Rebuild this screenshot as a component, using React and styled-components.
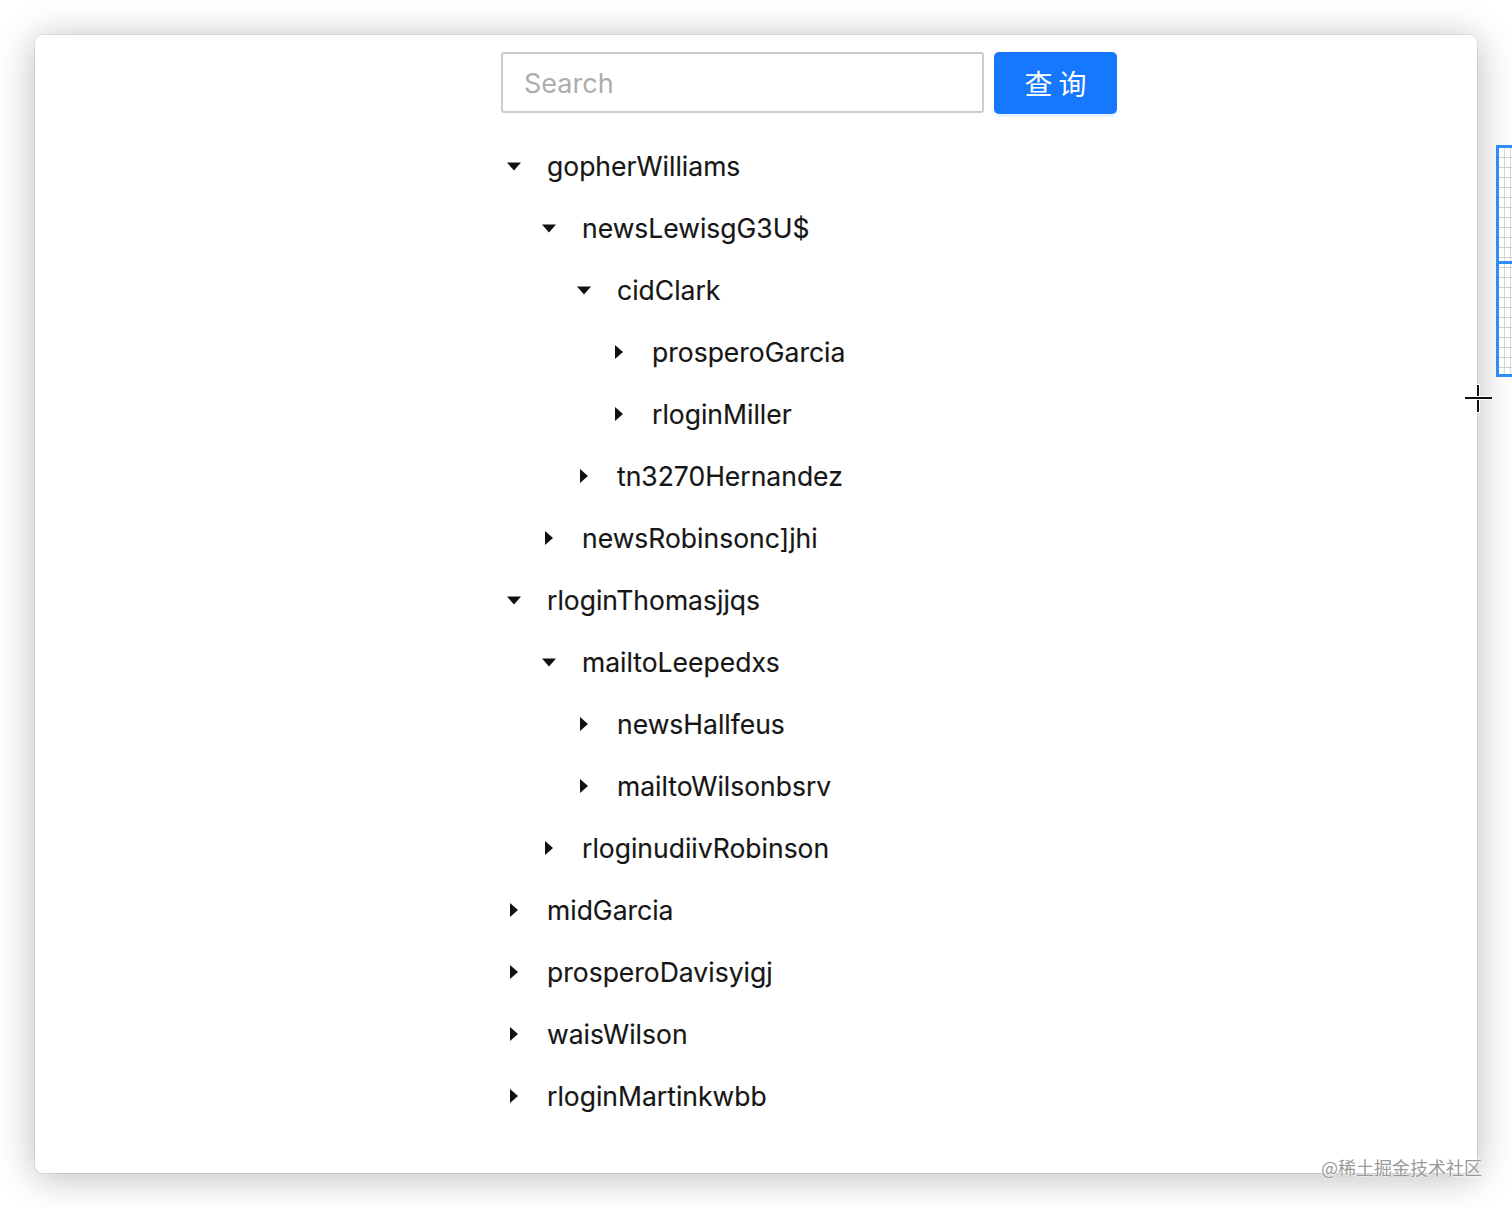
import React, { useState } from 'react';
import styled, { createGlobalStyle } from 'styled-components';

const GlobalStyle = createGlobalStyle`
  html, body {
    margin: 0;
    padding: 0;
    background: #fff;
  }
  body {
    font-family: Inter, "Noto Sans", "Noto Sans CJK SC", sans-serif;
  }
`;

// Screen area around the window
const Page = styled.div`
  position: relative;
  width: 1512px;
  height: 1208px;
  padding: 35px;
  box-sizing: border-box;
  overflow: hidden;
  background: #fff;
`;

const Window = styled.div`
  height: 100%;
  background: #fff;
  border-radius: 8px;
  box-shadow: 0 4px 38px rgba(0, 0, 0, 0.28), 0 0 0 1px rgba(0, 0, 0, 0.07);
  padding: 17px 0 0 466px;
  box-sizing: border-box;
  display: flex;
  flex-direction: column;
`;

const SearchBar = styled.div`
  display: flex;
  gap: 10px;
  align-items: flex-start;
`;

const SearchInput = styled.input`
  width: 483px;
  height: 61px;
  box-sizing: border-box;
  border: 2px solid #cdcdcd;
  border-radius: 3px;
  padding: 2px 21px 0;
  font-family: Inter, "Noto Sans", sans-serif;
  font-size: 27px;
  color: #222;
  outline: none;

  &::placeholder {
    color: #adadad;
  }
`;

const SearchButton = styled.button`
  width: 123px;
  height: 62px;
  border: none;
  border-radius: 5px;
  background: #1677ff;
  color: #fff;
  font-family: "Noto Sans CJK SC", sans-serif;
  font-size: 28px;
  letter-spacing: 6px;
  padding: 0 0 0 6px;
  cursor: pointer;
  box-shadow: 0 3px 0 rgba(5, 145, 255, 0.1);
`;

const Tree = styled.ul`
  list-style: none;
  margin: 21px 0 0;
  padding: 0;
`;

const Row = styled.li`
  height: 62px;
  display: flex;
  align-items: center;
  padding-left: ${(p) => 3 + p.$level * 35}px;
  cursor: pointer;
`;

const Switcher = styled.span`
  width: 20px;
  height: 20px;
  display: flex;
  align-items: center;
  justify-content: center;
  margin-right: 23px;
  flex-shrink: 0;
`;

const Title = styled.span`
  font-size: 26.5px;
  color: #161616;
  white-space: nowrap;
  -webkit-text-stroke: 0.15px #161616;
`;

const Watermark = styled.div`
  position: absolute;
  right: 30px;
  top: 1154px;
  font-family: "Noto Sans CJK SC", sans-serif;
  font-size: 18px;
  color: #9a9a9a;
  text-shadow: 0 0 2px #fff, 0 0 2px #fff;
`;

// Partially visible panel peeking in at the right edge
const EdgePanel = styled.div`
  position: absolute;
  left: 1496px;
  top: 145px;
  width: 40px;
  height: 232px;
  box-sizing: border-box;
  border: 3px solid #2e8df6;
  background-color: #fff;
  background-image:
    linear-gradient(#2e8df6, #2e8df6),
    repeating-linear-gradient(to bottom, transparent 0 9px, #cfcfcf 9px 10px),
    repeating-linear-gradient(to right, transparent 0 5px, #d8d8d8 5px 6px);
  background-size: 100% 3px, 100% 100%, 100% 100%;
  background-position: 0 113px, 0 0, 0 0;
  background-repeat: no-repeat;
`;

const Crosshair = styled.div`
  position: absolute;
  left: 1465px;
  top: 385px;
  width: 27px;
  height: 27px;

  &::before,
  &::after {
    content: '';
    position: absolute;
    background: #111;
    box-shadow: 0 0 0 1px #fff;
  }
  &::before {
    left: 12px;
    top: 0;
    width: 2px;
    height: 27px;
  }
  &::after {
    top: 12px;
    left: 0;
    width: 27px;
    height: 2px;
  }
`;

const treeData = [
  {
    key: '0',
    title: 'gopherWilliams',
    children: [
      {
        key: '0-0',
        title: 'newsLewisgG3U$',
        children: [
          {
            key: '0-0-0',
            title: 'cidClark',
            children: [
              { key: '0-0-0-0', title: 'prosperoGarcia', children: [{ key: '0-0-0-0-0', title: 'leaf' }] },
              { key: '0-0-0-1', title: 'rloginMiller', children: [{ key: '0-0-0-1-0', title: 'leaf' }] },
            ],
          },
          { key: '0-0-1', title: 'tn3270Hernandez', children: [{ key: '0-0-1-0', title: 'leaf' }] },
        ],
      },
      { key: '0-1', title: 'newsRobinsonc]jhi', children: [{ key: '0-1-0', title: 'leaf' }] },
    ],
  },
  {
    key: '1',
    title: 'rloginThomasjjqs',
    children: [
      {
        key: '1-0',
        title: 'mailtoLeepedxs',
        children: [
          { key: '1-0-0', title: 'newsHallfeus', children: [{ key: '1-0-0-0', title: 'leaf' }] },
          { key: '1-0-1', title: 'mailtoWilsonbsrv', children: [{ key: '1-0-1-0', title: 'leaf' }] },
        ],
      },
      { key: '1-1', title: 'rloginudiivRobinson', children: [{ key: '1-1-0', title: 'leaf' }] },
    ],
  },
  { key: '2', title: 'midGarcia', children: [{ key: '2-0', title: 'leaf' }] },
  { key: '3', title: 'prosperoDavisyigj', children: [{ key: '3-0', title: 'leaf' }] },
  { key: '4', title: 'waisWilson', children: [{ key: '4-0', title: 'leaf' }] },
  { key: '5', title: 'rloginMartinkwbb', children: [{ key: '5-0', title: 'leaf' }] },
];

const Caret = ({ open }) => (
  <svg width="16" height="16" viewBox="0 0 16 16">
    {open ? <path d="M1 4.5h14L8 12.5z" fill="#111" /> : <path d="M4 1v14l8-7z" fill="#111" />}
  </svg>
);

const renderNodes = (nodes, level, expanded, toggle) =>
  nodes.flatMap((node) => {
    const open = expanded.includes(node.key);
    const rows = [
      <Row key={node.key} $level={level} onClick={() => toggle(node.key)}>
        <Switcher>{node.children && <Caret open={open} />}</Switcher>
        <Title>{node.title}</Title>
      </Row>,
    ];
    if (open && node.children) {
      rows.push(...renderNodes(node.children, level + 1, expanded, toggle));
    }
    return rows;
  });

const App = () => {
  const [expanded, setExpanded] = useState(['0', '0-0', '0-0-0', '1', '1-0']);
  const [query, setQuery] = useState('');

  const toggle = (key) =>
    setExpanded((prev) => (prev.includes(key) ? prev.filter((k) => k !== key) : [...prev, key]));

  return (
    <>
      <GlobalStyle />
      <Page>
        <Window>
          <SearchBar>
            <SearchInput placeholder="Search" value={query} onChange={(e) => setQuery(e.target.value)} />
            <SearchButton>查询</SearchButton>
          </SearchBar>
          <Tree>{renderNodes(treeData, 0, expanded, toggle)}</Tree>
        </Window>
        <EdgePanel />
        <Crosshair />
        <Watermark>@稀土掘金技术社区</Watermark>
      </Page>
    </>
  );
};

export default App;
